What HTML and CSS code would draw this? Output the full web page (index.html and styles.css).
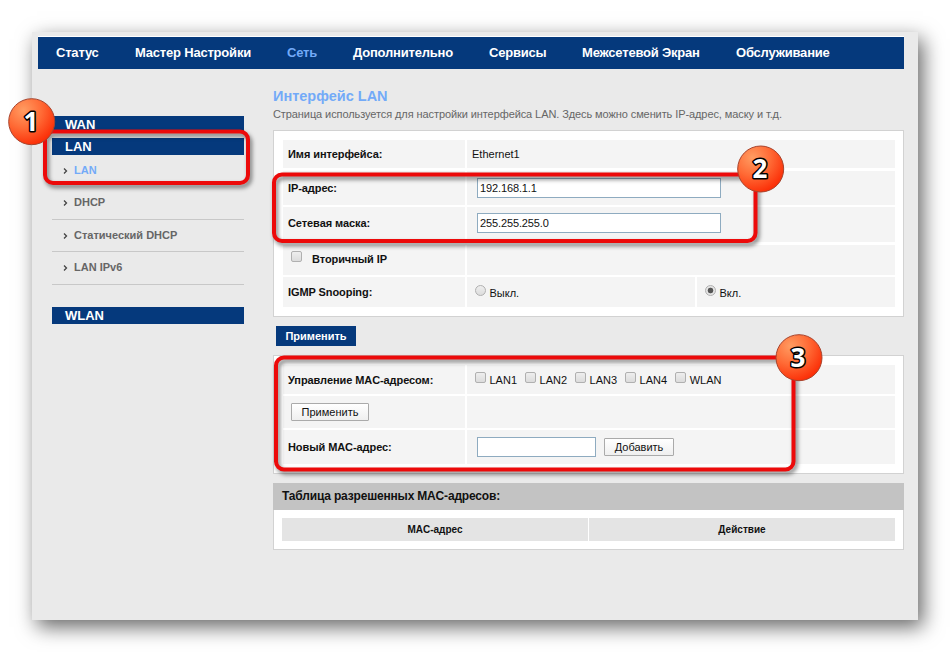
FILE: index.html
```html
<!DOCTYPE html>
<html lang="ru">
<head>
  <meta charset="UTF-8">
  <meta name="viewport" content="width=device-width, initial-scale=1.0">
  <title>Интерфейс LAN</title>
  <link rel="stylesheet" href="styles.css">
</head>
<body>
  <div class="window">
    <nav class="top-nav">
      <a class="w43">Статус</a>
      <a class="w116">Мастер Настройки</a>
      <a class="w30 active">Сеть</a>
      <a class="w100">Дополнительно</a>
      <a class="w57">Сервисы</a>
      <a class="w118">Межсетевой Экран</a>
      <a class="w94">Обслуживание</a>
    </nav>

    <div class="content">
      <aside class="sidebar">
        <h2 class="menu-title">WAN</h2>
        <h2 class="menu-title menu-lan">LAN</h2>
        <ul class="menu">
          <li class="current"><svg class="arrow" viewBox="0 0 5 6"><path d="M1 .5 3.5 3 1 5.5"/></svg>LAN</li>
          <li><svg class="arrow" viewBox="0 0 5 6"><path d="M1 .5 3.5 3 1 5.5"/></svg>DHCP</li>
          <li><svg class="arrow" viewBox="0 0 5 6"><path d="M1 .5 3.5 3 1 5.5"/></svg>Статический DHCP</li>
          <li><svg class="arrow" viewBox="0 0 5 6"><path d="M1 .5 3.5 3 1 5.5"/></svg>LAN IPv6</li>
        </ul>
        <h2 class="menu-title menu-wlan">WLAN</h2>
      </aside>

      <main class="main">
        <h1>Интерфейс LAN</h1>
        <p class="intro">Страница используется для настройки интерфейса LAN. Здесь можно сменить IP-адрес, маску и т.д.</p>

        <form class="panel panel-lan">
          <div class="cell label">Имя интерфейса:</div>
          <div class="cell wide">Ethernet1</div>

          <label class="cell label" for="ip">IP-адрес:</label>
          <div class="cell wide field"><input class="text" type="text" id="ip" value="192.168.1.1"></div>

          <label class="cell label mask" for="mask">Сетевая маска:</label>
          <div class="cell wide field mask"><input class="text" type="text" id="mask" value="255.255.255.0"></div>

          <label class="cell label secondary"><input class="check" type="checkbox">Вторичный IP</label>
          <div class="cell wide"></div>

          <div class="cell label">IGMP Snooping:</div>
          <label class="cell option"><input class="check radio" type="radio" name="igmp">Выкл.</label>
          <label class="cell option"><input class="check radio" type="radio" name="igmp" checked>Вкл.</label>
        </form>

        <button class="apply" type="button">Применить</button>

        <form class="panel panel-mac">
          <div class="cell label">Управление MAC-адресом:</div>
          <div class="cell ports">
            <label><input class="check" type="checkbox">LAN1</label>
            <label><input class="check" type="checkbox">LAN2</label>
            <label><input class="check" type="checkbox">LAN3</label>
            <label><input class="check" type="checkbox">LAN4</label>
            <label><input class="check" type="checkbox">WLAN</label>
          </div>

          <div class="cell"><button class="plain plain-apply" type="button">Применить</button></div>
          <div class="cell"></div>

          <label class="cell label" for="mac">Новый MAC-адрес:</label>
          <div class="cell field"><input class="text short" type="text" id="mac"><button class="plain" type="button">Добавить</button></div>
        </form>

        <section class="mac-table">
          <h3>Таблица разрешенных MAC-адресов:</h3>
          <div class="table-head">
            <span>MAC-адрес</span>
            <span>Действие</span>
          </div>
        </section>
      </main>
    </div>
  </div>

  <!-- numbered callouts over the page -->
  <svg class="callouts" width="950" height="652" viewBox="0 0 950 652">
    <defs>
      <radialGradient id="ball" cx="0.32" cy="0.25" r="0.8">
        <stop offset="0" stop-color="#ff9c62"/>
        <stop offset="0.5" stop-color="#ff6a35"/>
        <stop offset="1" stop-color="#fb2c05"/>
      </radialGradient>
    </defs>
    <g class="frames">
      <rect x="45" y="131.5" width="203" height="51.5" rx="8"/>
      <rect x="274" y="174.5" width="481.5" height="66.5" rx="8"/>
      <rect x="276" y="357.5" width="517.5" height="112" rx="8"/>
    </g>
    <g class="balls">
      <circle cx="31.7" cy="121.7" r="23"/>
      <circle cx="760.7" cy="169" r="23"/>
      <circle cx="799" cy="357.7" r="23"/>
    </g>
    <g class="digits">
      <text x="31" y="131">1</text>
      <text x="760" y="178">2</text>
      <text x="798" y="367">3</text>
    </g>
  </svg>
</body>
</html>
```
FILE: styles.css
```css
* {
  box-sizing: border-box;
}
body {
  margin: 0;
  padding: 32px;
  height: 652px;
  overflow: hidden;
  background: #fff;
  color: #111;
  font-family: "Liberation Sans", Arial, sans-serif;
  font-size: 11px;
}
h1, h2, h3, p, ul {
  margin: 0;
  padding: 0;
}
.window {
  width: 886px;
  height: 588px;
  padding: 4px 14px 0 6px;
  background: #eaeaea;
  box-shadow: 5px 7px 19px rgba(0, 0, 0, 0.6);
}
.top-nav {
  display: flex;
  gap: 36px;
  height: 33px;
  padding-left: 18px;
  border-top: 1px solid #fff;
  background: #05397c;
  color: #fff;
  font-size: 13px;
  font-weight: bold;
  letter-spacing: -0.2px;
  line-height: 32px;
  white-space: nowrap;
}
.top-nav .active {
  color: #73aaf8;
}
.w43 { width: 43px; }
.w116 { width: 116px; }
.w30 { width: 30px; }
.w100 { width: 100px; }
.w57 { width: 57px; }
.w118 { width: 118px; }
.w94 { width: 94px; }

.content {
  display: flex;
}
.sidebar {
  width: 192px;
  margin: 47px 29px 0 14px;
}
.menu-title {
  height: 17px;
  padding-left: 13px;
  background: #05397c;
  color: #fff;
  font-size: 13px;
  line-height: 17px;
}
.menu-lan {
  margin-top: 5px;
}
.menu-wlan {
  margin-top: 22px;
}
.menu {
  list-style: none;
}
.menu li {
  display: flex;
  align-items: center;
  height: 32.5px;
  padding: 0 0 1px 11px;
  border-bottom: 1px solid #c8c8c8;
  color: #666;
  font-size: 11px;
  font-weight: bold;
}
.menu .current {
  height: 32px;
  border-color: transparent;
  color: #73aaf8;
}
.arrow {
  width: 5px;
  height: 6px;
  margin: 2px 6px 0 0;
  fill: none;
  stroke: #444;
  stroke-width: 1.3;
}

.main {
  width: 631px;
  padding-top: 19px;
}
h1 {
  color: #73aaf8;
  font-size: 14.5px;
  line-height: 17px;
}
.intro {
  height: 25px;
  color: #666;
  font-size: 11px;
  letter-spacing: -0.09px;
  line-height: 18px;
  white-space: nowrap;
}
.panel {
  display: grid;
  column-gap: 2px;
  padding: 9px 8px 9px 9px;
  border: 1px solid #d2d2d2;
  background: #fff;
}
.panel-lan {
  height: 187px;
  grid-template-columns: 182px 228px 1fr;
  grid-template-rows: 28px 34px 35px 30px 30px;
  row-gap: 2px;
  align-content: space-between;
}
.panel-mac {
  height: 119px;
  grid-template-columns: 182px 1fr;
  grid-template-rows: 29px 32px 34px;
  row-gap: 2px;
}
.cell {
  display: flex;
  align-items: center;
  padding-left: 5px;
  background: #f4f4f4;
}
.label {
  font-size: 11px;
  font-weight: bold;
  letter-spacing: -0.08px;
}
.wide {
  grid-column: span 2;
}
.field {
  padding-left: 10px;
}
.mask {
  padding-bottom: 3px;
}
.secondary {
  padding-bottom: 2px;
}
.secondary .check {
  margin: -4px 10px 0 3px;
}
.option, .ports {
  padding: 1px 0 0 8px;
}
.ports {
  gap: 8px;
  padding-top: 0;
}
.ports label {
  display: flex;
  align-items: center;
}
.check {
  appearance: none;
  flex: none;
  width: 11px;
  height: 11px;
  margin: -4px 3.5px 0 0;
  border: 1px solid #b0b0b0;
  border-radius: 2px;
  background: linear-gradient(#eee, #dcdcdc);
}
.radio {
  border-radius: 50%;
}
.radio:checked {
  background: radial-gradient(circle, #555 0 2.5px, #e5e5e5 3.2px);
}
.text {
  width: 244px;
  height: 20px;
  padding: 0 2px;
  border: 1px solid #8eabc0;
  background: #fff;
  color: #111;
  font: 11px "Liberation Sans", Arial, sans-serif;
  letter-spacing: -0.12px;
}
.short {
  width: 119px;
  margin-right: 8px;
}
.apply {
  display: block;
  width: 80px;
  height: 20px;
  margin: 9px 0 9px 3px;
  padding: 0;
  border: 0;
  background: #05397c;
  color: #fff;
  font: bold 11px "Liberation Sans", Arial, sans-serif;
}
.plain {
  width: 70px;
  height: 18px;
  padding: 0;
  border: 1px solid #aaa;
  border-radius: 1px;
  background: linear-gradient(#fff, #efefef);
  color: #111;
  font: 11px "Liberation Sans", Arial, sans-serif;
}
.plain-apply {
  width: 78px;
  margin-left: 3px;
}
.mac-table {
  height: 67px;
  margin-top: 9px;
  border: 1px solid #d2d2d2;
  border-top: 0;
  background: #fff;
}
.mac-table h3 {
  height: 27px;
  margin: 0 -1px;
  padding-left: 9px;
  background: #c3c3c3;
  font-size: 12px;
  letter-spacing: -0.18px;
  line-height: 27px;
}
.table-head {
  display: flex;
  gap: 1px;
  margin: 8px 8px 0;
}
.table-head span {
  flex: 1;
  height: 23px;
  background: #e4e4e4;
  font-size: 10px;
  font-weight: bold;
  line-height: 23px;
  text-align: center;
}

.callouts {
  position: absolute;
  top: 0;
  left: 0;
  pointer-events: none;
}
.frames {
  fill: none;
  stroke: #ec0a0a;
  stroke-width: 4;
  filter: drop-shadow(2px 3px 2px rgba(0, 0, 0, 0.5));
}
.balls {
  fill: url(#ball);
  stroke: #a8432c;
  stroke-width: 1;
}
.digits {
  fill: #fff;
  stroke: #000;
  stroke-width: 3;
  stroke-linejoin: round;
  paint-order: stroke;
  font-family: "Open Sans", "Noto Sans", sans-serif;
  font-size: 26px;
  font-weight: bold;
  text-anchor: middle;
}
```
